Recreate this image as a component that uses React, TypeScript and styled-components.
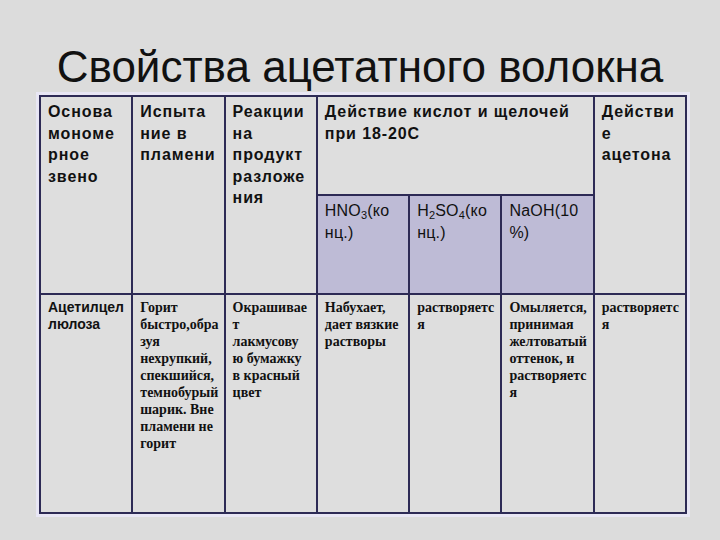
import styled, { createGlobalStyle } from "styled-components";

const GlobalStyle = createGlobalStyle`
  html, body {
    margin: 0;
    padding: 0;
    background: #dcdcdc;
  }
`;

const Slide = styled.main`
  width: 720px;
  height: 540px;
  box-sizing: border-box;
  padding-top: 45px;
  background: #dcdcdc;
  overflow: hidden;
`;

const Title = styled.h1`
  margin: 0 0 6px;
  text-align: center;
  font-family: "Liberation Sans", Arial, sans-serif;
  font-size: 44px;
  line-height: 44px;
  font-weight: 400;
  color: #111111;
`;

const Table = styled.table`
  margin-left: 39px;
  width: 648px;
  table-layout: fixed;
  border-collapse: collapse;
  box-shadow: 0 0 0 3px #e8e6f4;
`;

const Cell = styled.td<{ $sub?: boolean; $h: number }>`
  height: ${(p) => p.$h}px;
  box-sizing: border-box;
  padding: 4px 4px 0 7px;
  vertical-align: top;
  border: 2px solid #2d2a55;
  background: ${(p) => (p.$sub ? "#bebbd6" : "#dedede")};
  color: #111111;
`;

const HeadText = styled.div<{ $bold?: boolean }>`
  font-family: "Liberation Sans", Arial, sans-serif;
  font-size: 16px;
  line-height: 21.5px;
  font-weight: ${(p) => (p.$bold ? 700 : 400)};
  letter-spacing: ${(p) => (p.$bold ? "0.9px" : "0.2px")};
  white-space: nowrap;

  sub {
    font-size: 11px;
    line-height: 0;
    vertical-align: -3px;
  }
`;

const BodyText = styled.div<{ $sans?: boolean }>`
  font-family: ${(p) =>
    p.$sans
      ? `"Liberation Sans", Arial, sans-serif`
      : `"Liberation Serif", "Times New Roman", serif`};
  font-size: 14px;
  line-height: 17px;
  font-weight: 700;
  white-space: nowrap;
`;

const Lines = ({ lines }: { lines: string[] }) => (
  <>
    {lines.map((l, i) => (
      <span key={i}>
        {l}
        {i < lines.length - 1 && <br />}
      </span>
    ))}
  </>
);

const bodyCells: { lines: string[]; sans?: boolean }[] = [
  { lines: ["Ацетилцел", "люлоза"], sans: true },
  {
    lines: [
      "Горит",
      "быстро,обра",
      "зуя",
      "нехрупкий,",
      "спекшийся,",
      "темнобурый",
      "шарик. Вне",
      "пламени не",
      "горит",
    ],
  },
  { lines: ["Окрашивае", "т", "лакмусову", "ю бумажку", "в красный", "цвет"] },
  { lines: ["Набухает,", "дает вязкие", "растворы"] },
  { lines: ["растворяетс", "я"] },
  {
    lines: [
      "Омыляется,",
      "принимая",
      "желтоватый",
      "оттенок, и",
      "растворяетс",
      "я",
    ],
  },
  { lines: ["растворяетс", "я"] },
];

export default function App() {
  return (
    <>
      <GlobalStyle />
      <Slide>
        <Title>Свойства ацетатного волокна</Title>
        <Table>
          <colgroup>
            {Array.from({ length: 7 }).map((_, i) => (
              <col key={i} />
            ))}
          </colgroup>
          <tbody>
            <tr>
              <Cell $h={99} rowSpan={2}>
                <HeadText $bold>
                  <Lines lines={["Основа", "мономе", "рное", "звено"]} />
                </HeadText>
              </Cell>
              <Cell $h={99} rowSpan={2}>
                <HeadText $bold>
                  <Lines lines={["Испыта", "ние в", "пламени"]} />
                </HeadText>
              </Cell>
              <Cell $h={99} rowSpan={2}>
                <HeadText $bold>
                  <Lines lines={["Реакции", "на", "продукт", "разложе", "ния"]} />
                </HeadText>
              </Cell>
              <Cell $h={99} colSpan={3}>
                <HeadText $bold>
                  <Lines lines={["Действие кислот и щелочей", "при 18-20С"]} />
                </HeadText>
              </Cell>
              <Cell $h={99} rowSpan={2}>
                <HeadText $bold>
                  <Lines lines={["Действи", "е", "ацетона"]} />
                </HeadText>
              </Cell>
            </tr>
            <tr>
              <Cell $h={99} $sub>
                <HeadText>
                  HNO<sub>3</sub>(ко
                  <br />
                  нц.)
                </HeadText>
              </Cell>
              <Cell $h={99} $sub>
                <HeadText>
                  H<sub>2</sub>SO<sub>4</sub>(ко
                  <br />
                  нц.)
                </HeadText>
              </Cell>
              <Cell $h={99} $sub>
                <HeadText>
                  NaOH(10
                  <br />
                  %)
                </HeadText>
              </Cell>
            </tr>
            <tr>
              {bodyCells.map((c, i) => (
                <Cell $h={219} key={i}>
                  <BodyText $sans={c.sans}>
                    <Lines lines={c.lines} />
                  </BodyText>
                </Cell>
              ))}
            </tr>
          </tbody>
        </Table>
      </Slide>
    </>
  );
}
